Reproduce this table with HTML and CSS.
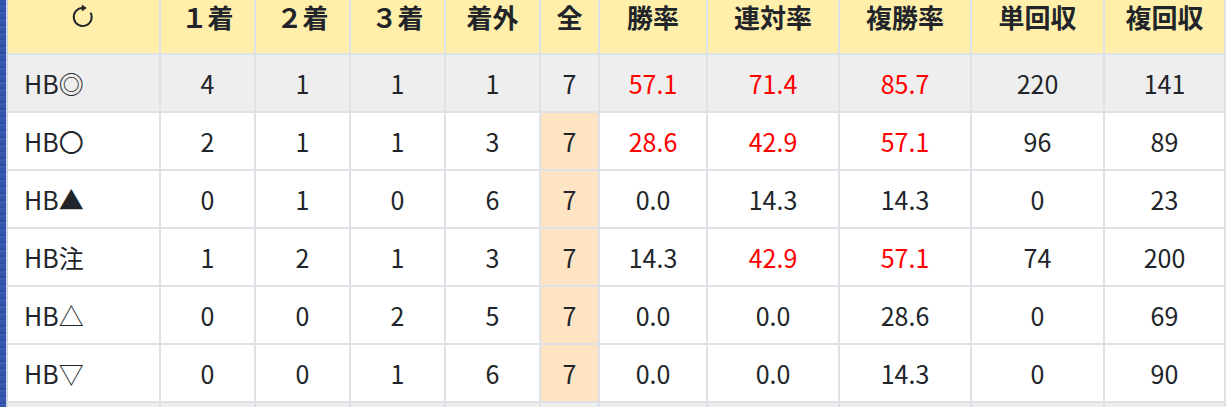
FILE: index.html
```html
<!DOCTYPE html>
<html lang="ja">
<head>
<meta charset="utf-8">
<link rel="stylesheet" href="styles.css">
</head>
<body>
<div class="page">
  <div class="sidebar"></div>
  <div class="gap"></div>
  <table class="stats">
    <thead>
      <tr>
        <th class="c-name"><svg class="refresh" viewBox="0 0 24 24" width="24" height="24"><path d="M19.6 8.6 A9 9 0 1 1 11.4 4" fill="none" stroke="#212529" stroke-width="1.9"/><path d="M10.8 0.6 L15.8 4 L10.8 7.4 Z" fill="#212529"/></svg></th>
        <th class="c-n">１着</th>
        <th class="c-n">２着</th>
        <th class="c-n">３着</th>
        <th class="c-n">着外</th>
        <th class="c-all">全</th>
        <th class="c-r1">勝率</th>
        <th class="c-r2">連対率</th>
        <th class="c-r2">複勝率</th>
        <th class="c-r3">単回収</th>
        <th class="c-r4">複回収</th>
      </tr>
    </thead>
    <tbody>
      <tr class="hl">
        <td class="name">HB◎</td><td>4</td><td>1</td><td>1</td><td>1</td><td class="all">7</td>
        <td class="red">57.1</td><td class="red">71.4</td><td class="red">85.7</td><td>220</td><td>141</td>
      </tr>
      <tr>
        <td class="name">HB〇</td><td>2</td><td>1</td><td>1</td><td>3</td><td class="all">7</td>
        <td class="red">28.6</td><td class="red">42.9</td><td class="red">57.1</td><td>96</td><td>89</td>
      </tr>
      <tr>
        <td class="name">HB▲</td><td>0</td><td>1</td><td>0</td><td>6</td><td class="all">7</td>
        <td>0.0</td><td>14.3</td><td>14.3</td><td>0</td><td>23</td>
      </tr>
      <tr>
        <td class="name">HB注</td><td>1</td><td>2</td><td>1</td><td>3</td><td class="all">7</td>
        <td>14.3</td><td class="red">42.9</td><td class="red">57.1</td><td>74</td><td>200</td>
      </tr>
      <tr>
        <td class="name">HB△</td><td>0</td><td>0</td><td>2</td><td>5</td><td class="all">7</td>
        <td>0.0</td><td>0.0</td><td>28.6</td><td>0</td><td>69</td>
      </tr>
      <tr>
        <td class="name">HB▽</td><td>0</td><td>0</td><td>1</td><td>6</td><td class="all">7</td>
        <td>0.0</td><td>0.0</td><td>14.3</td><td>0</td><td>90</td>
      </tr>
      <tr class="hl">
        <td class="name"></td><td></td><td></td><td></td><td></td><td class="all"></td>
        <td></td><td></td><td></td><td></td><td></td>
      </tr>
    </tbody>
  </table>
</div>
</body>
</html>
```

FILE: styles.css
```css
html, body {
  margin: 0;
  padding: 0;
  background: #fff;
  overflow: hidden;
}

.page {
  display: flex;
  align-items: flex-start;
  width: 1226px;
  height: 407px;
  overflow: hidden;
}

.sidebar {
  flex: 0 0 6px;
  height: 407px;
  background: repeating-linear-gradient(180deg, #3356ae 0 3px, #2c4fa3 3px 5px, #3a5cb2 5px 7px);
}

.gap {
  flex: 0 0 2px;
  height: 407px;
  background: #cdd5e4;
}

.stats {
  flex: 0 0 auto;
  border-collapse: separate;
  border-spacing: 0;
  table-layout: fixed;
  width: 1217px;
  font-family: "Noto Sans CJK JP", "Noto Sans", sans-serif;
  color: #212529;
}

.stats th,
.stats td {
  box-sizing: border-box;
  border-right: 2px solid #dee2e6;
  border-bottom: 2px solid #dee2e6;
  text-align: center;
  padding: 0;
}

.stats th {
  height: 55px;
  background: #ffefab;
  font-size: 26px;
  font-weight: bold;
  line-height: 32px;
  vertical-align: top;
  padding-top: 1px;
  white-space: nowrap;
}

.c-name { width: 153px; }
.c-n { width: 95px; }
.c-all { width: 59px; }
.c-r1 { width: 108px; }
.c-r2 { width: 132px; }
.c-r3 { width: 133px; }
.c-r4 { width: 121px; }

.refresh {
  display: block;
  margin: 3px 0 0 63px;
}

.stats td {
  height: 58px;
  font-size: 25px;
  line-height: 30px;
  vertical-align: middle;
  background: #fff;
}

.stats td.name {
  text-align: left;
  padding-left: 16px;
}

.stats td.all {
  background: #ffe4c4;
}

.stats tr.hl td {
  background: #eeeeee;
}

.stats td.red {
  color: #ff0000;
}
```
